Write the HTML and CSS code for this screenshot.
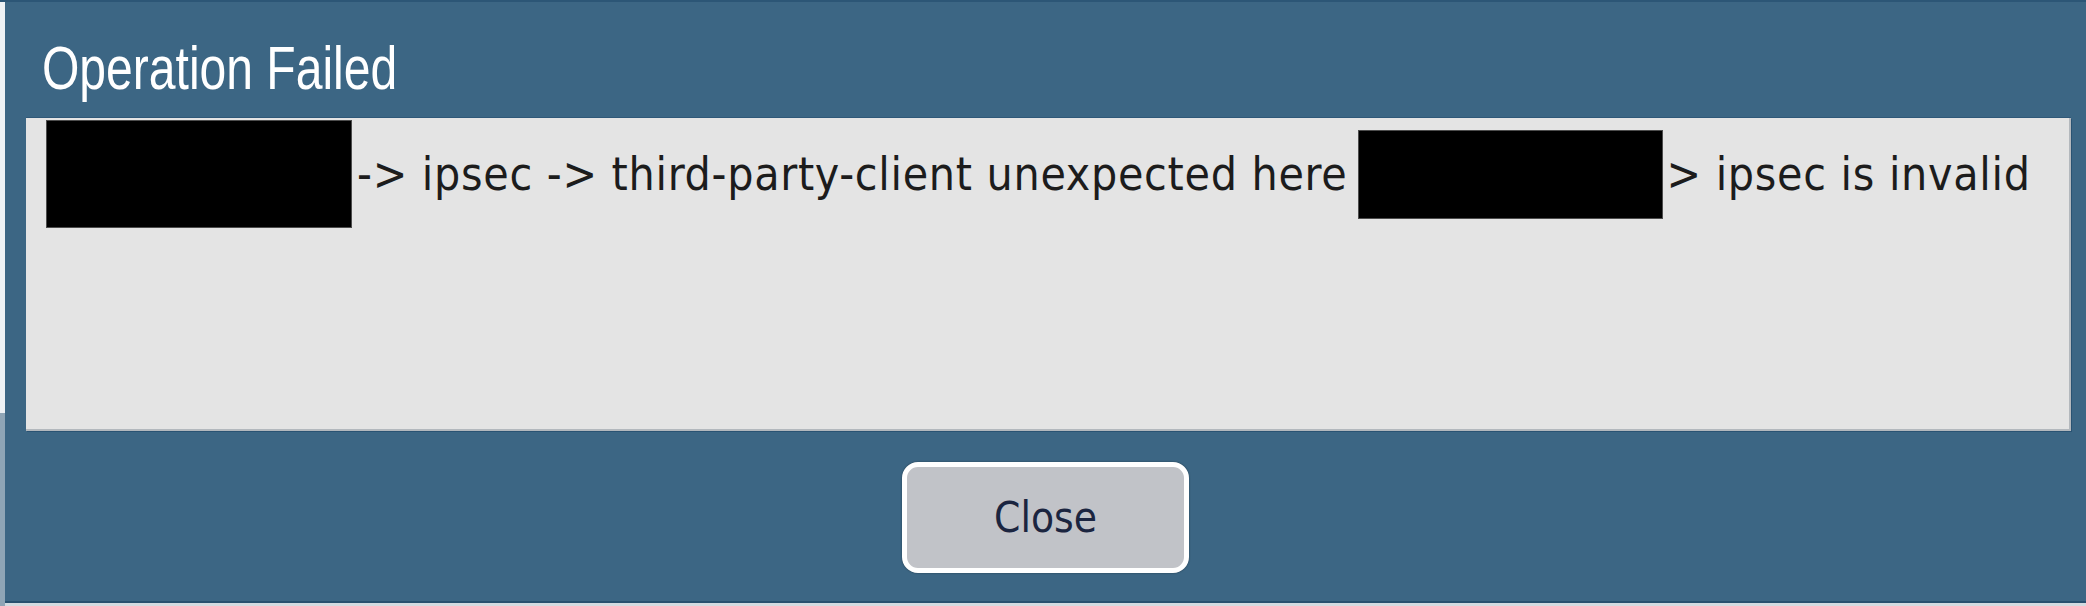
FILE: index.html
```html
<!DOCTYPE html>
<html lang="en">
<head>
<meta charset="utf-8">
<title>Operation Failed</title>
<link rel="stylesheet" href="styles.css">
</head>
<body>
<div class="screen">
  <div class="edge"></div>
  <div class="dialog">
    <div class="title-bar">
      <h1 class="title">Operation Failed</h1>
    </div>
    <div class="message-box">
      <div class="message-row">
        <span class="redact redact-a"></span>
        <span class="msg msg-a">-&gt; ipsec -&gt; third-party-client unexpected here</span>
        <span class="redact redact-b"></span>
        <span class="msg msg-b">&gt; ipsec is invalid</span>
      </div>
    </div>
    <div class="actions">
      <button class="btn-close" type="button">Close</button>
    </div>
  </div>
</div>
</body>
</html>
```
FILE: styles.css
```css
html, body {
  margin: 0;
  padding: 0;
  background: #3c6684;
}

.screen {
  width: 2086px;
  height: 606px;
  display: flex;
  background: #3c6684;
  border-top: 2px solid #2c5676;
  box-sizing: border-box;
  overflow: hidden;
}

.edge {
  width: 5px;
  flex: none;
  background: linear-gradient(#eef2f5 0, #eef2f5 68%, #8fa5b6 68%, #8fa5b6 100%);
}

.dialog {
  flex: 1;
  display: flex;
  flex-direction: column;
  border-bottom: 2px solid #28506f;
  box-shadow: 0 3px 0 #d3dbe1;
  height: 601px;
  box-sizing: border-box;
}

.title-bar {
  height: 62px;
  margin-top: 35px;
  padding-left: 37px;
}

.title {
  margin: 0;
  font-family: "Liberation Sans", Arial, sans-serif;
  font-weight: normal;
  font-size: 62px;
  line-height: 62px;
  color: #ffffff;
  white-space: nowrap;
  transform: scaleX(0.775);
  transform-origin: left top;
}

.message-box {
  margin-top: 19px;
  margin-left: 21px;
  margin-right: 15px;
  height: 313px;
  box-sizing: border-box;
  background: #e4e4e4;
  border-right: 2px solid #b3b8bd;
  border-bottom: 2px solid #b3b8bd;
  box-shadow: 1px 1px 0 #2a5373, 0 -1px 0 #2f5878;
  padding: 2px 0 0 20px;
}

.message-row {
  display: flex;
  align-items: center;
  height: 108px;
  white-space: nowrap;
}

.msg {
  font-family: "DejaVu Sans Condensed", "DejaVu Sans", sans-serif;
  font-stretch: condensed;
  font-size: 46px;
  line-height: 54px;
  letter-spacing: 0.7px;
  color: #1c1c1c;
}

.msg-a {
  margin-left: 5px;
}

.msg-b {
  margin-left: 3px;
}

.redact {
  display: block;
  background: #000;
  border: 1px solid #4d4d4d;
  box-sizing: border-box;
  flex: none;
}

.redact-a {
  width: 306px;
  height: 108px;
}

.redact-b {
  width: 305px;
  height: 89px;
  margin-left: 11px;
}

.actions {
  display: flex;
  justify-content: center;
  margin-top: 31px;
}

.btn-close {
  width: 287px;
  height: 111px;
  box-sizing: border-box;
  border: 5px solid #ffffff;
  border-radius: 16px;
  background: #c1c3c8;
  box-shadow: 0 0 2px rgba(0, 0, 0, 0.45);
  font-family: "DejaVu Sans Condensed", "DejaVu Sans", sans-serif;
  font-stretch: condensed;
  font-size: 42px;
  color: #1b2540;
  padding: 0;
  cursor: pointer;
}
```
